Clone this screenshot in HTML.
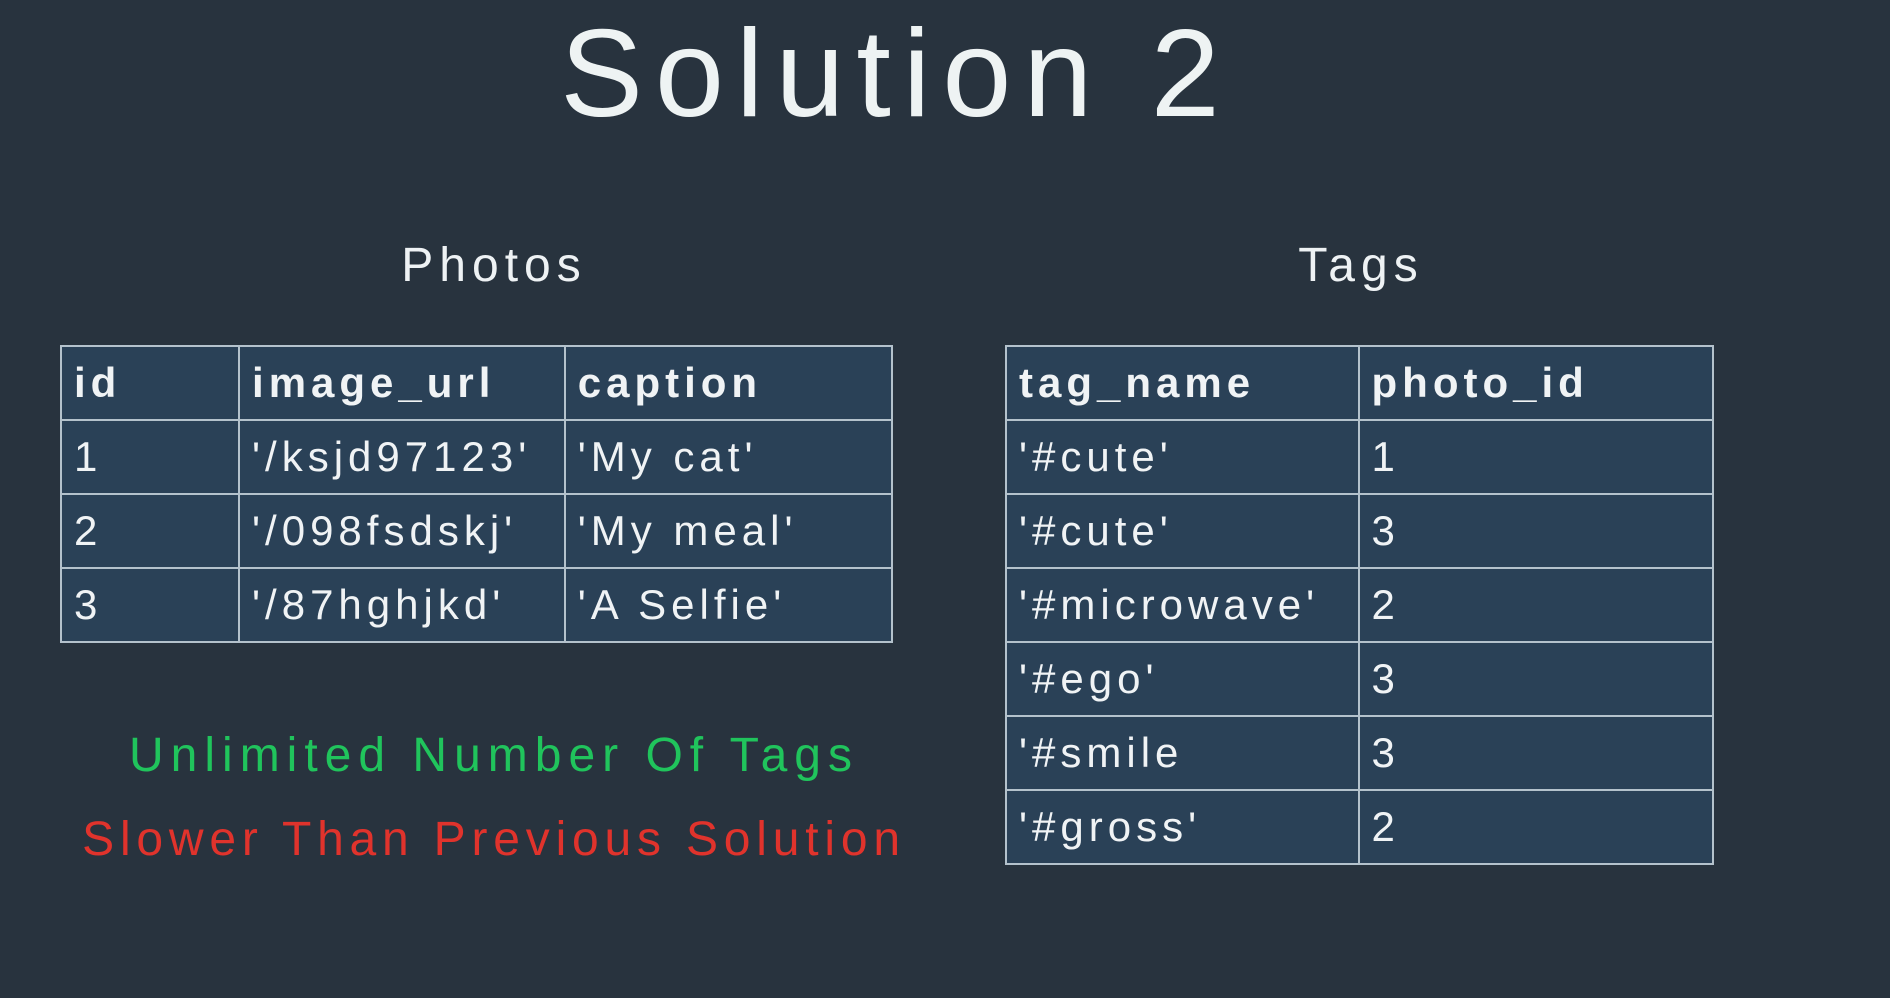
<!DOCTYPE html>
<html><head><meta charset="utf-8"><style>
html,body{margin:0;padding:0}
body{width:1890px;height:998px;background:#28333e;position:relative;overflow:hidden;font-family:"Liberation Sans",sans-serif;color:#eef2f4}
.t{position:absolute;white-space:nowrap;text-align:center}
table{position:absolute;border-collapse:collapse;background:#2a4157}
td{border:2px solid #b4c2cc;height:70px;padding:0 0 0 12px;font-size:42px;letter-spacing:5px;color:#f0f3f5;vertical-align:middle;box-sizing:border-box;white-space:nowrap}
tr.h td{font-weight:bold;letter-spacing:5px}
</style></head><body>
<div class="t" style="left:456px;width:880px;top:4px;font-size:124px;line-height:140px;letter-spacing:12px;color:#eef3f3">Solution 2</div>
<div class="t" style="left:294px;width:400px;top:238px;font-size:48px;line-height:56px;letter-spacing:6px">Photos</div>
<div class="t" style="left:1161px;width:400px;top:238px;font-size:48px;line-height:56px;letter-spacing:6px">Tags</div>
<table style="left:60px;top:345px;width:833px">
<colgroup><col style="width:179px"><col style="width:326px"><col style="width:328px"></colgroup>
<tr class="h" style="height:74px"><td>id</td><td>image_url</td><td>caption</td></tr>
<tr style="height:74px"><td>1</td><td>'/ksjd97123'</td><td>'My cat'</td></tr>
<tr style="height:74px"><td>2</td><td>'/098fsdskj'</td><td>'My meal'</td></tr>
<tr style="height:74px"><td>3</td><td>'/87hghjkd'</td><td>'A Selfie'</td></tr>
</table>
<table style="left:1005px;top:345px;width:709px">
<colgroup><col style="width:353px"><col style="width:356px"></colgroup>
<tr class="h" style="height:74px"><td>tag_name</td><td>photo_id</td></tr>
<tr style="height:74px"><td>'#cute'</td><td>1</td></tr>
<tr style="height:74px"><td>'#cute'</td><td>3</td></tr>
<tr style="height:74px"><td>'#microwave'</td><td>2</td></tr>
<tr style="height:74px"><td>'#ego'</td><td>3</td></tr>
<tr style="height:74px"><td>'#smile</td><td>3</td></tr>
<tr style="height:74px"><td>'#gross'</td><td>2</td></tr>
</table>
<div class="t" style="left:44px;width:900px;top:724px;font-size:48px;line-height:64px;letter-spacing:7px;color:#20c45c">Unlimited Number Of Tags</div>
<div class="t" style="left:44px;width:900px;top:808px;font-size:48px;line-height:64px;letter-spacing:5.8px;color:#e0332c">Slower Than Previous Solution</div>
</body></html>
